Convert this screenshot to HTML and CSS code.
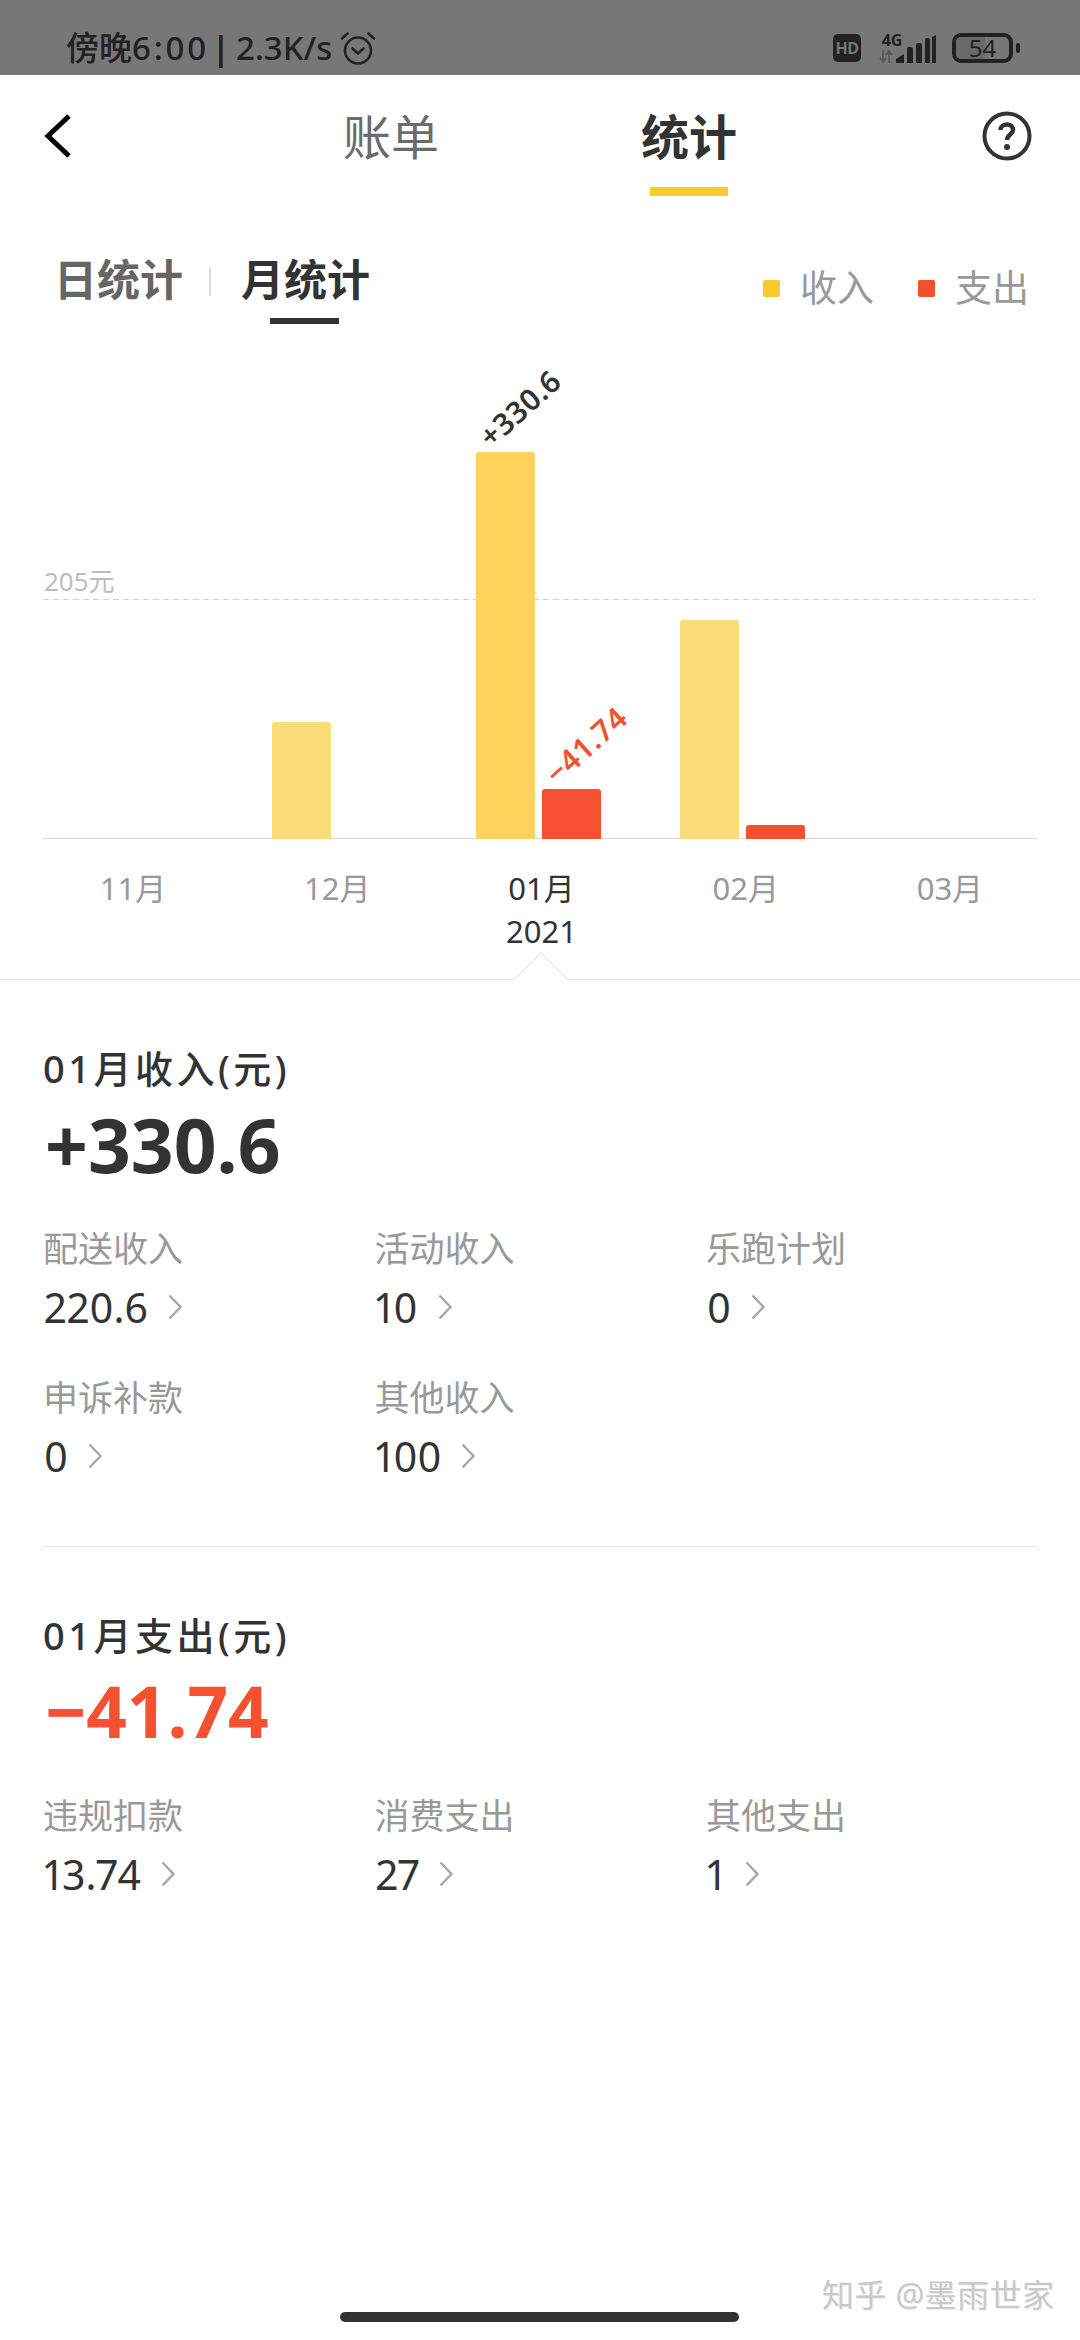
FILE: index.html
```html
<!DOCTYPE html>
<html lang="zh-CN">
<head>
<meta charset="utf-8">
<title>统计</title>
<link rel="stylesheet" href="styles.css">
</head>
<body>
<div class="page">
  <header class="status">
    <div class="status-left">
      <span class="status-text">傍晚<span class="time">6:00</span><b class="pipe">|</b>2.3K/s</span>
      <svg class="alarm" viewBox="0 0 36 34"><g fill="none" stroke="#222" stroke-width="2.6" stroke-linecap="round" stroke-linejoin="round"><circle cx="18" cy="19.5" r="13"/><path d="M12.5 17.5l5.500 5 5.500-5"/><path d="M2 7.500L7.500 2.500M34 7.500L28.500 2.500"/></g></svg>
    </div>
    <div class="status-right">
      <span class="hd">HD</span>
      <div class="net">
        <span class="net-type">4G</span>
        <svg class="net-arrows" viewBox="0 0 14 13"><path d="M4 0v11M1 8l3 4 3-4M10 13V2M7 5l3-4 3 4" fill="none" stroke="#555" stroke-width="1.600"/></svg>
      </div>
      <svg class="signal" viewBox="0 0 40 28"><path d="M0 28v-4l8-5v9zM11 28V14q0-2 2-2h2q2 0 2 2v14zM20 28V10q0-2 2-2h2q2 0 2 2v18zM29 28V5q0-2 2-2h1q2 0 2 2v23z" fill="#222"/><path d="M36 28V2l4-2v28z" fill="#222"/></svg>
      <div class="battery"><span class="battery-fill"></span><span class="battery-num">54</span></div>
      <span class="battery-nub"></span>
    </div>
  </header>

  <nav class="nav">
    <svg class="back" viewBox="0 0 28 46"><path d="M25 3L4 23l21 20" fill="none" stroke="#000" stroke-width="5"/></svg>
    <div class="nav-tabs">
      <div class="nav-tab">账单<i class="nav-mark none"></i></div>
      <div class="nav-tab active">统计<i class="nav-mark"></i></div>
    </div>
    <svg class="help" viewBox="0 0 50 50"><circle cx="25" cy="25" r="22.500" fill="none" stroke="#333" stroke-width="4"/><path d="M18.500 19c0-3.500 3-5.500 6.500-5.500s6 2 6 5.500c0 4.500-6 4.500-6 10" fill="none" stroke="#333" stroke-width="4.500"/><circle cx="25" cy="36" r="3" fill="#333"/></svg>
  </nav>

  <div class="subbar">
    <div class="subtabs">
      <div class="subtab">日统计</div>
      <span class="subdiv"></span>
      <div class="subtab active">月统计<i class="sub-mark"></i></div>
    </div>
    <div class="legend">
      <span class="dot dot-in"></span><span class="legend-text">收入</span>
      <span class="dot dot-out"></span><span class="legend-text">支出</span>
    </div>
  </div>

  <section class="chart">
    <div class="plot">
      <div class="refline"><span class="reflabel">205元</span></div>
      <div class="col"></div>
      <div class="col">
        <div class="bar bar-in" style="height:117px"></div>
        <div class="bar bar-none"></div>
      </div>
      <div class="col">
        <div class="bar bar-in current" style="height:387px"><span class="barval">+330.6</span></div>
        <div class="bar bar-out" style="height:50px"><span class="barval neg">−41.74</span></div>
      </div>
      <div class="col">
        <div class="bar bar-in" style="height:219px"></div>
        <div class="bar bar-out" style="height:14px"></div>
      </div>
      <div class="col"></div>
    </div>
    <div class="months">
      <div class="month">11月</div>
      <div class="month">12月</div>
      <div class="month current">01月<br>2021<i class="caret"></i></div>
      <div class="month">02月</div>
      <div class="month">03月</div>
    </div>
  </section>

  <section class="summary">
    <h2 class="sum-title">01月收入(元)</h2>
    <div class="sum-amount">+330.6</div>
    <div class="items">
      <div class="item"><div class="item-label">配送收入</div><div class="item-value">220.6<svg class="chev" viewBox="0 0 14 26"><path d="M1.500 1.500L12.500 13 1.500 24.500"/></svg></div></div>
      <div class="item"><div class="item-label">活动收入</div><div class="item-value">10<svg class="chev" viewBox="0 0 14 26"><path d="M1.500 1.500L12.500 13 1.500 24.500"/></svg></div></div>
      <div class="item"><div class="item-label">乐跑计划</div><div class="item-value">0<svg class="chev" viewBox="0 0 14 26"><path d="M1.500 1.500L12.500 13 1.500 24.500"/></svg></div></div>
      <div class="item"><div class="item-label">申诉补款</div><div class="item-value">0<svg class="chev" viewBox="0 0 14 26"><path d="M1.500 1.500L12.500 13 1.500 24.500"/></svg></div></div>
      <div class="item"><div class="item-label">其他收入</div><div class="item-value">100<svg class="chev" viewBox="0 0 14 26"><path d="M1.500 1.500L12.500 13 1.500 24.500"/></svg></div></div>
    </div>
  </section>
  <section class="summary last">
    <h2 class="sum-title">01月支出(元)</h2>
    <div class="sum-amount neg">−41.74</div>
    <div class="items">
      <div class="item"><div class="item-label">违规扣款</div><div class="item-value">13.74<svg class="chev" viewBox="0 0 14 26"><path d="M1.500 1.500L12.500 13 1.500 24.500"/></svg></div></div>
      <div class="item"><div class="item-label">消费支出</div><div class="item-value">27<svg class="chev" viewBox="0 0 14 26"><path d="M1.500 1.500L12.500 13 1.500 24.500"/></svg></div></div>
      <div class="item"><div class="item-label">其他支出</div><div class="item-value">1<svg class="chev" viewBox="0 0 14 26"><path d="M1.500 1.500L12.500 13 1.500 24.500"/></svg></div></div>
    </div>
  </section>

  <div class="watermark">知乎 @墨雨世家</div>
  <div class="homebar"></div>
</div>
</body>
</html>
```
FILE: styles.css
```css
* { box-sizing: border-box; }
html, body { margin: 0; padding: 0; background: #fff; }
body { font-family: "Noto Sans", "Noto Sans CJK SC", sans-serif; color: #333; }
.page { position: relative; width: 1080px; height: 2340px; overflow: hidden; background: #fff; }

/* status bar */
.status { height: 75px; background: #777; display: flex; justify-content: space-between; align-items: center; padding: 20px 60px 0 66px; }
.status-left { display: flex; align-items: center; gap: 8px; }
.status-text { font-size: 33px; font-weight: 500; color: #222; line-height: 40px; white-space: nowrap; }
.time { letter-spacing: 2.8px; }
.pipe { font-weight: 700; margin: 0 6px 0 3px; }
.alarm { width: 36px; height: 34px; margin-top: 1px; }
.status-right { display: flex; align-items: center; }
.hd { width: 28px; height: 28px; border-radius: 5px; background: #222; color: #777; font-size: 16px; font-weight: 700; line-height: 28px; text-align: center; letter-spacing: -0.5px; }
.net { width: 26px; margin-left: 18px; display: flex; flex-direction: column; align-items: center; }
.net-type { font-size: 16px; line-height: 16px; font-weight: 700; color: #222; }
.net-arrows { width: 14px; height: 13px; margin: 2px 12px 0 0; }
.signal { width: 40px; height: 28px; margin-left: -9px; margin-top: 3px; }
.battery { position: relative; width: 61px; height: 30px; margin-left: 16px; border: 4px solid #222; border-radius: 9px; text-align: center; }
.battery-fill { position: absolute; left: 0; top: 0; bottom: 0; width: 54%; background: #6a6a6a; border-radius: 5px 0 0 5px; }
.battery-num { position: relative; font-size: 24px; line-height: 22px; display: block; color: #222; }
.battery-nub { width: 4px; height: 10px; margin-left: 3px; background: #222; border-radius: 2px; }

/* nav */
.nav { display: grid; grid-template-columns: 1fr auto 1fr; align-items: start; padding: 35px 48px 0; }
.back { width: 28px; height: 46px; margin: 3px 0 0 -4px; }
.nav-tabs { display: flex; gap: 202px; }
.nav-tab { font-size: 48px; line-height: 54px; color: #6b6b6b; display: flex; flex-direction: column; align-items: center; }
.nav-tab.active { color: #333; font-weight: 700; }
.nav-mark { width: 78px; height: 9px; margin-top: 23px; background: #fbc92f; }
.nav-mark.none { background: none; }
.help { width: 50px; height: 50px; justify-self: end; margin-top: 1px; }

/* sub tabs */
.subbar { display: flex; justify-content: space-between; padding: 59px 51px 0 54px; height: 128px; }
.subtabs { display: flex; align-items: flex-start; }
.subtab { position: relative; font-size: 43px; line-height: 50px; font-weight: 700; color: #666; }
.subtab.active { color: #333; }
.sub-mark { position: absolute; left: 29px; top: 63px; width: 69px; height: 6px; background: #333; }
.subdiv { width: 2px; height: 29px; margin: 12px 30px 0 26px; background: #ddd; }
.legend { display: flex; align-items: center; height: 36px; margin-top: 15px; }
.dot { width: 17px; height: 17px; border-radius: 2px; }
.dot-in { background: #fbc92f; }
.dot-out { background: #f5502c; margin-left: 44px; }
.legend-text { font-size: 37px; line-height: 36px; color: #999; margin-left: 20px; }

/* chart */
.chart { border-bottom: 1px solid #e2e2e2; padding: 0 31px 26px 28px; }
.plot { position: relative; display: grid; grid-template-columns: repeat(5, 1fr); height: 515px; }
.plot::after { content: ""; position: absolute; left: 15px; right: 12px; bottom: 0; height: 1px; background: #d9d9d9; }
.refline { position: absolute; left: 15px; right: 14px; top: 275px; height: 1px; background: repeating-linear-gradient(90deg, #cfcfcf 0 6px, transparent 6px 10px); }
.reflabel { position: absolute; left: 1px; bottom: 4px; font-size: 26px; line-height: 30px; color: #bdbdbd; }
.col { display: flex; justify-content: center; align-items: flex-end; gap: 7px; }
.bar { position: relative; width: 59px; border-radius: 3px 3px 0 0; z-index: 1; }
.bar-in { background: #fcdc78; }
.bar-in.current { background: #fdd35a; }
.bar-out { background: #f5502f; }
.bar-none { background: none; }
.barval { position: absolute; left: 18px; bottom: 100%; transform-origin: left bottom; transform: rotate(-42deg); font-size: 30px; line-height: 30px; letter-spacing: 0.5px; font-weight: 600; color: #333; white-space: nowrap; }
.barval.neg { color: #f0522f; }
.months { display: grid; grid-template-columns: repeat(5, 1fr); padding-top: 28px; height: 114px; margin: 0 -3px 0 3px; }
.month { position: relative; font-size: 31px; line-height: 43px; color: #999; text-align: center; }
.month.current { color: #333; }
.caret { position: absolute; left: 50%; top: 93px; width: 38px; height: 38px; margin-left: -19px; transform: rotate(45deg); background: #fff; border-left: 1px solid #e2e2e2; border-top: 1px solid #e2e2e2; }

/* summaries */
.summary { position: relative; margin: 0 43px; padding: 63px 0 65px; border-bottom: 1px solid #e6e6e6; }
.summary.last { border-bottom: 0; }
.sum-title { margin: 0; font-size: 38px; line-height: 50px; font-weight: 500; letter-spacing: 3.5px; color: #333; }
.sum-amount { margin-top: 6px; padding-left: 2px; font-size: 75px; line-height: 90px; font-weight: 700; color: #333; }
.sum-amount.neg { font-size: 71px; color: #f5502f; }
.items { display: grid; grid-template-columns: repeat(3, 331.500px); row-gap: 44px; margin-top: 38px; }
.item-label { font-size: 35px; line-height: 44px; color: #999; }
.item-value { display: flex; align-items: center; gap: 20px; margin-top: 11px; padding-left: 1px; font-size: 41px; line-height: 50px; color: #333; font-variant-numeric: proportional-nums; }
.chev { width: 14px; height: 26px; }
.chev path { fill: none; stroke: #a8a8a8; stroke-width: 2.500; }

/* overlays */
.watermark { position: absolute; left: 822px; top: 2275px; font-size: 32px; line-height: 40px; letter-spacing: 0.4px; color: #c9c9c9; white-space: nowrap; text-shadow: 1px 1px 0 #eee; }
.homebar { position: absolute; left: 340px; top: 2312px; width: 399px; height: 10px; border-radius: 5px; background: #333; }
```
